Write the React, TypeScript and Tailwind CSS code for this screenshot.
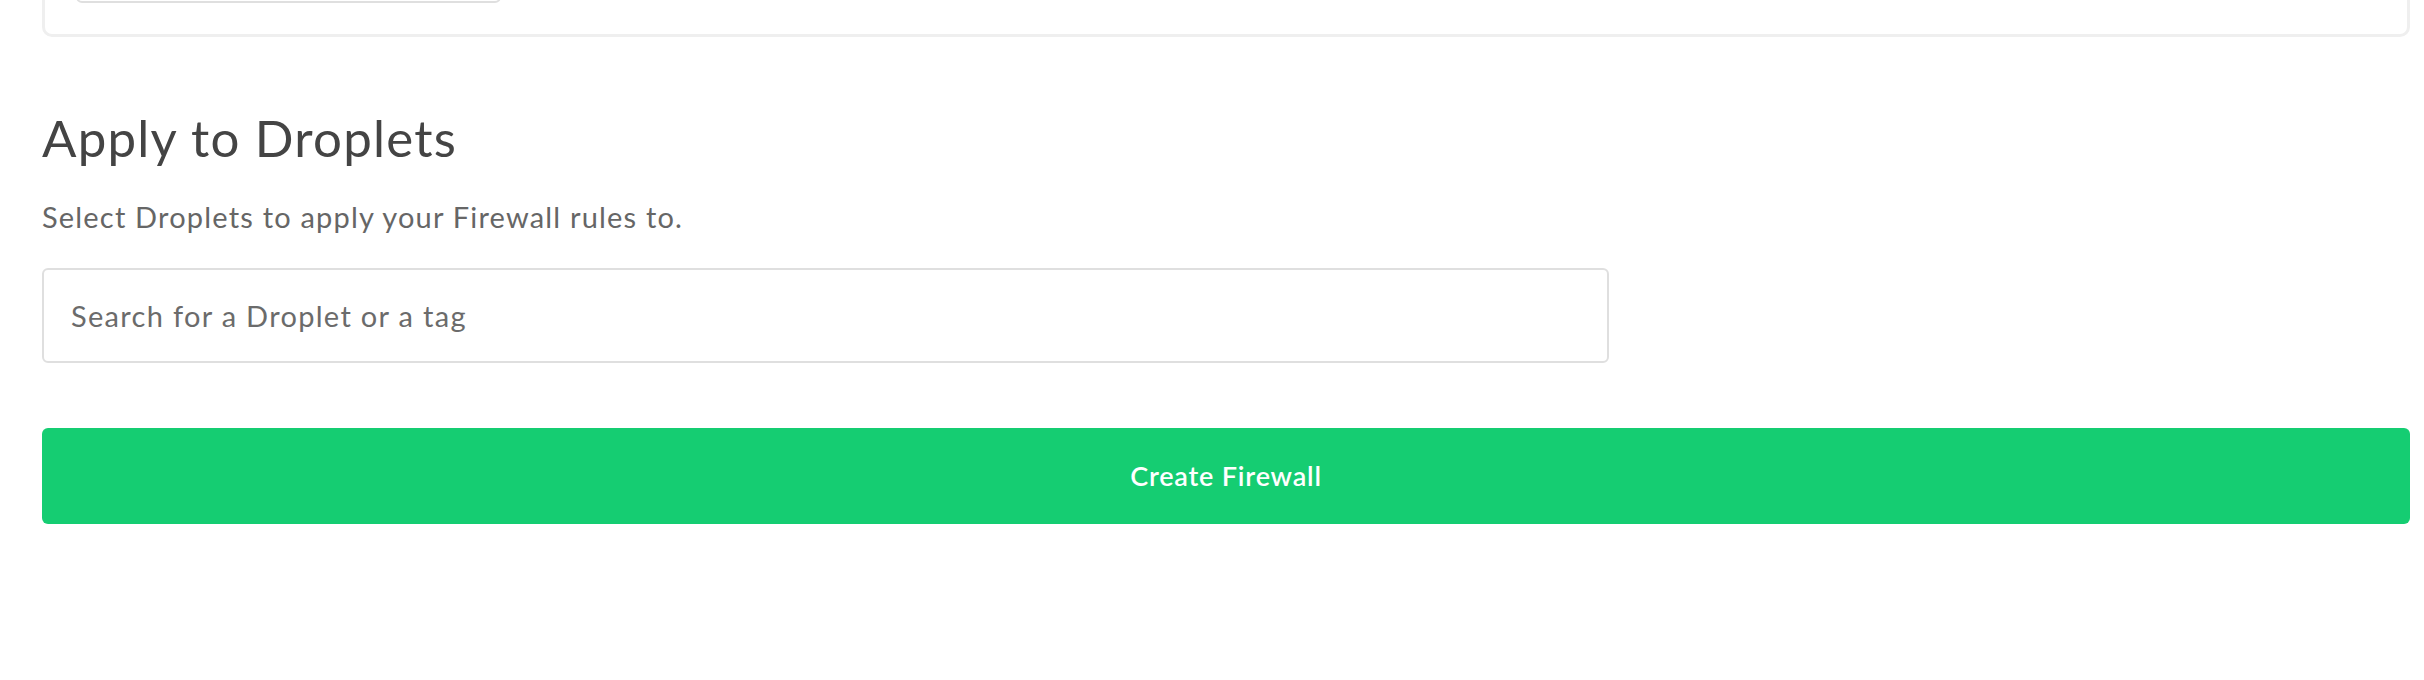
export default function App() {
  return (
    <div className="min-h-screen bg-white overflow-hidden font-['Lato','Open_Sans',sans-serif]">
      <div className="pl-[42px] pr-[14px]">
        {/* Previous section card, cut off at the top */}
        <div className="-mt-[100px] h-[137px] border-[3px] border-[#efefef] rounded-[10px] pl-[31px] pt-[40px]">
          <div className="h-[60px] w-[425px] border-2 border-[#dfdfdf] rounded-[6px]" />
        </div>

        {/* Apply to Droplets */}
        <h2 className="mt-[70px] text-[51px] leading-[1.2] font-normal tracking-[0.024em] text-[#444444]">Apply to Droplets</h2>
        <p className="mt-[32px] text-[29px] leading-[1.2] tracking-[0.041em] text-[#666666]">
          Select Droplets to apply your Firewall rules to.
        </p>

        <input
          type="text"
          placeholder="Search for a Droplet or a tag"
          className="mt-[33px] block w-[1567px] h-[95px] border-2 border-[#dfdfdf] rounded-[6px] pl-[27px] text-[29px] tracking-[0.045em] text-[#444] placeholder:text-[#6b6b6b] outline-none"
        />

        <button className="mt-[65px] w-full h-[96px] rounded-[6px] bg-[#15cd72] text-white text-[27px] font-semibold tracking-[0.03em]">
          Create Firewall
        </button>
      </div>
    </div>
  );
}
